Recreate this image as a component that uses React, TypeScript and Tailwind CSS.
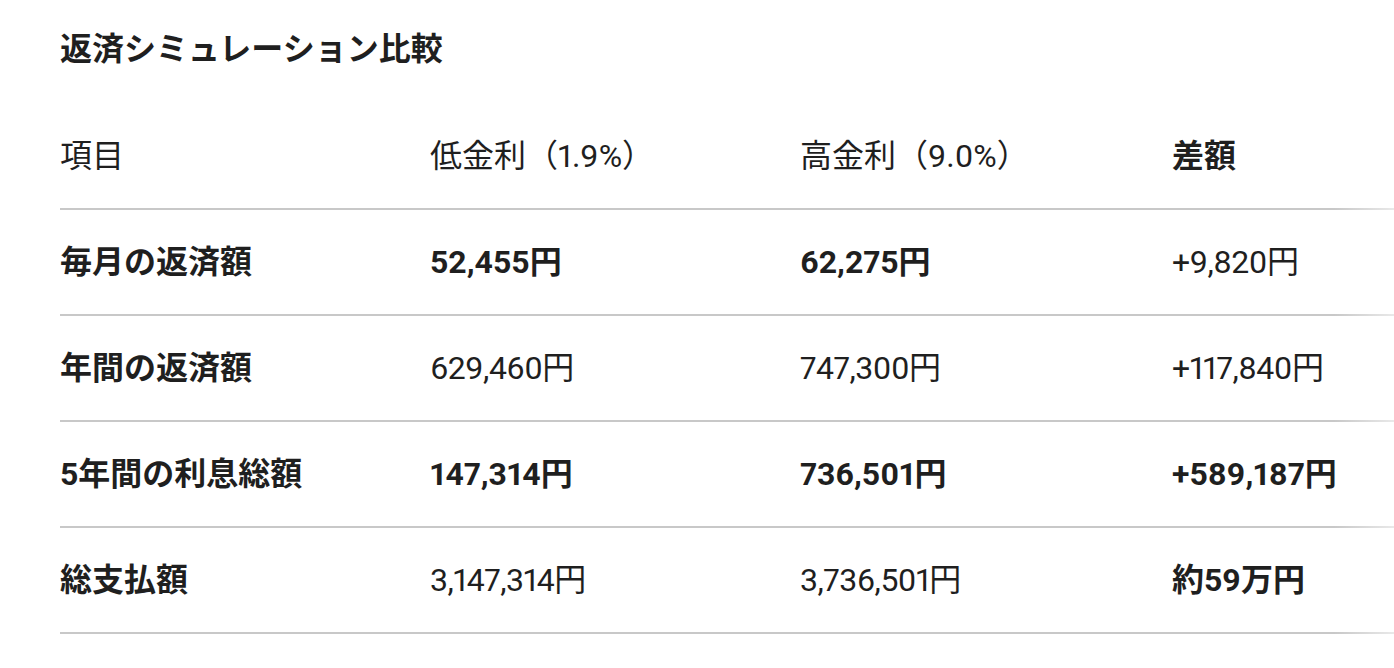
import React from "react";

type Cell = { text: string; bold?: boolean };
type Row = { label: string; cells: Cell[] };

const rows: Row[] = [
  {
    label: "毎月の返済額",
    cells: [
      { text: "52,455円", bold: true },
      { text: "62,275円", bold: true },
      { text: "+9,820円" },
    ],
  },
  {
    label: "年間の返済額",
    cells: [{ text: "629,460円" }, { text: "747,300円" }, { text: "+117,840円" }],
  },
  {
    label: "5年間の利息総額",
    cells: [
      { text: "147,314円", bold: true },
      { text: "736,501円", bold: true },
      { text: "+589,187円", bold: true },
    ],
  },
  {
    label: "総支払額",
    cells: [
      { text: "3,147,314円" },
      { text: "3,736,501円" },
      { text: "約59万円", bold: true },
    ],
  },
];

const font = { fontFamily: "Roboto, 'Noto Sans CJK JP', sans-serif" };

export default function App() {
  return (
    <div
      className="w-[1394px] h-[668px] bg-white text-[#1f1f1f] overflow-hidden"
      style={font}
    >
      <h2 className="pl-[60px] pt-[25px] text-[32px] leading-[48px] font-bold">
        返済シミュレーション比較
      </h2>
      <div className="relative mt-[31px] pl-[60px] overflow-hidden">
        <div className="w-[1484px]">
          <div className="grid grid-cols-[370px_370px_372px_372px] h-[106px] items-center border-b-2 border-[#c8c8c8] text-[32px] leading-[48px] proportional-nums">
            <div className="font-normal">項目</div>
            <div>低金利（1.9%）</div>
            <div>高金利（9.0%）</div>
            <div className="font-bold">差額</div>
          </div>
          {rows.map((r) => (
            <div
              key={r.label}
              className="grid grid-cols-[370px_370px_372px_372px] h-[106px] items-center border-b-2 border-[#c8c8c8] text-[32px] leading-[48px] proportional-nums"
            >
              <div className="font-bold">{r.label}</div>
              {r.cells.map((c, i) => (
                <div
                  key={i}
                  className={c.bold ? "font-bold" : "font-normal tracking-[-0.5px]"}
                >
                  {c.text}
                </div>
              ))}
            </div>
          ))}
        </div>
        <div className="absolute right-0 top-0 bottom-0 w-[60px] bg-gradient-to-r from-white/0 to-white/60" />
      </div>
    </div>
  );
}
